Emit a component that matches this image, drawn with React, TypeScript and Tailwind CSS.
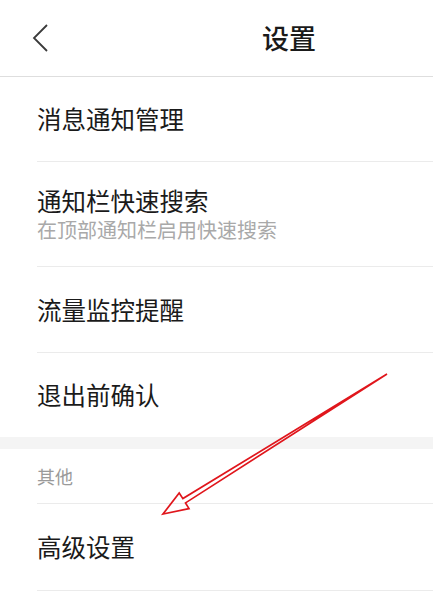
import React from "react";

const font = { fontFamily: '"Noto Sans CJK SC", "Noto Sans", sans-serif' };

const Row = ({ title, sub, h, last }: { title: string; sub?: string; h: string; last?: boolean }) => (
  <div className={`pl-[37px] ${h}`}>
    <div className={`flex h-full flex-col justify-center ${last ? "" : "border-b border-[#ebebeb]"}`}>
      <div className="text-[24.5px] leading-[30px] text-[#1a1a1a]">{title}</div>
      {sub && <div className="mt-[1px] text-[20px] leading-[26px] text-[#a9a9a9]">{sub}</div>}
    </div>
  </div>
);

export default function App() {
  return (
    <div className="relative h-[600px] w-[433px] overflow-hidden bg-white" style={font}>
      <header className="flex h-[77px] items-center border-b border-[#dedede] pb-[1px]">
        <svg width="16" height="30" viewBox="0 0 16 30" className="ml-[32px]">
          <path d="M15 2 L2 15 L15 28" fill="none" stroke="#3a3a3a" strokeWidth="1.8" />
        </svg>
        <h1 className="ml-[214px] text-[27px] font-medium leading-none text-[#1a1a1a]">设置</h1>
      </header>

      <Row title="消息通知管理" h="h-[85px]" />
      <Row title="通知栏快速搜索" sub="在顶部通知栏启用快速搜索" h="h-[105px]" />
      <Row title="流量监控提醒" h="h-[86px]" />
      <Row title="退出前确认" h="h-[84px]" last />

      <div className="h-[12px] bg-[#f4f4f4]" />

      <div className="pl-[37px]">
        <div className="flex h-[55px] items-center border-b border-[#ebebeb] text-[18px] text-[#9a9a9a]">其他</div>
      </div>
      <Row title="高级设置" h="h-[87px]" />

      <svg className="pointer-events-none absolute left-0 top-0" width="433" height="600" viewBox="0 0 433 600">
        <polygon
          points="387,374 185.5,502.9 189,508.6 163,514 179.2,493 182.9,498.6"
          fill="none"
          stroke="#e0161c"
          strokeWidth="1.7"
          strokeLinejoin="miter"
        />
      </svg>
    </div>
  );
}
